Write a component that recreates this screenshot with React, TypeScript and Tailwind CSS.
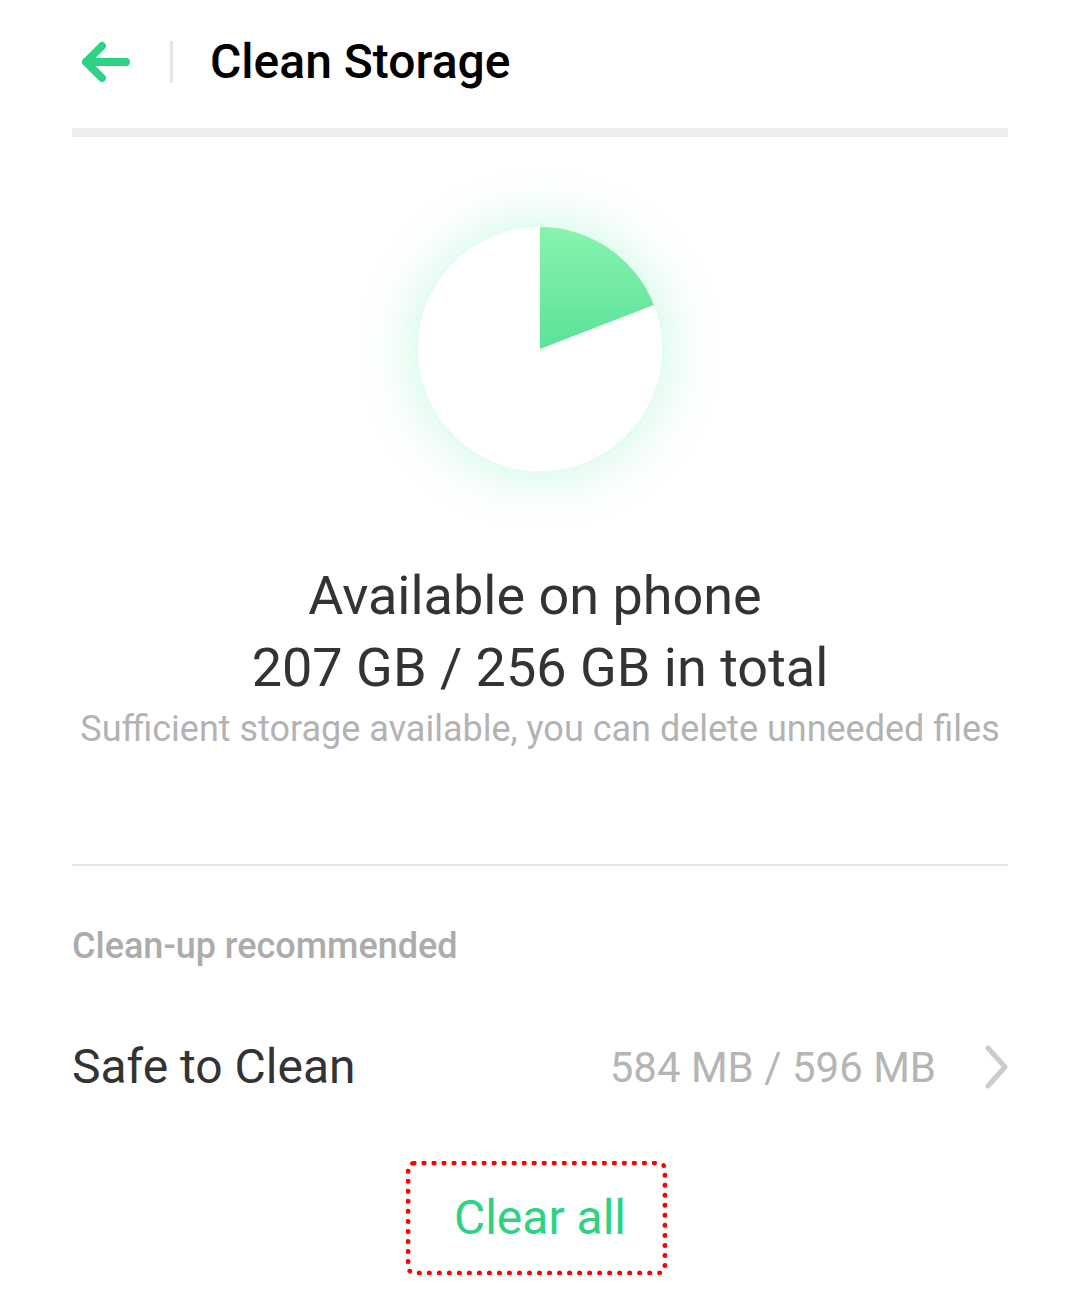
import React from "react";

function Pie() {
  const r = 122;
  const frac = 49 / 256;
  const a = frac * 2 * Math.PI;
  const x = 122 + r * Math.sin(a);
  const y = 122 - r * Math.cos(a);
  return (
    <div className="rounded-full w-[244px] h-[244px] bg-white shadow-[0_0_48px_10px_rgba(60,230,150,0.22)]">
      <svg width="244" height="244" viewBox="0 0 244 244">
        <defs>
          <linearGradient id="g" x1="0" y1="0" x2="0" y2="1">
            <stop offset="0" stopColor="#88f3ae" />
            <stop offset="1" stopColor="#5be29a" />
          </linearGradient>
        </defs>
        <circle cx="122" cy="122" r="122" fill="#ffffff" />
        <path d={`M122 122 L122 0 A122 122 0 0 1 ${x} ${y} Z`} fill="url(#g)" />
      </svg>
    </div>
  );
}

export default function App() {
  return (
    <div className="w-[1080px] h-[1300px] bg-white font-['Roboto',sans-serif] px-[72px]">
      <div className="h-[128px] flex items-center">
        <svg width="50" height="44" viewBox="0 0 50 44" className="ml-[8px] mt-[-4px]">
          <path d="M46 22 H6 M22 6 L6 22 L22 38" stroke="#2dd283" strokeWidth="8" strokeLinecap="round" strokeLinejoin="round" fill="none" />
        </svg>
        <div className="w-[3px] h-[42px] bg-[#e6e6e6] ml-[40px] mt-[-4px]" />
        <div className="ml-[37px] text-[48px] font-medium text-black leading-none mt-[-4px]">Clean Storage</div>
      </div>
      <div className="h-[9px] bg-[#eeeeee]" />
      <div className="flex justify-center mt-[90px]">
        <Pie />
      </div>
      <div className="flex flex-col items-center mt-[89px] text-center">
        <div className="text-[54px] leading-[72px] text-[#333333] pr-[10px]">Available on phone</div>
        <div className="text-[54px] leading-[72px] text-[#333333]">207 GB / 256 GB in total</div>
        <div className="text-[36px] leading-[50px] text-[#b3b3b3]">Sufficient storage available, you can delete unneeded files</div>
      </div>
      <div className="h-[2px] bg-[#e6e6e6] mt-[110px]" />
      <div className="mt-[58px] text-[36px] leading-[44px] font-medium text-[#acacac]">Clean-up recommended</div>
      <div className="mt-[69px] flex items-center h-[60px]">
        <div className="text-[48px] text-[#333333] flex-1">Safe to Clean</div>
        <div className="text-[42px] text-[#b5b5b5]">584 MB / 596 MB</div>
        <svg width="26" height="44" viewBox="0 0 26 44" className="ml-[48px] mr-[-2px]">
          <path d="M4 3 L21 22 L4 41" stroke="#cccccc" strokeWidth="5" strokeLinecap="round" strokeLinejoin="round" fill="none" />
        </svg>
      </div>
      <div className="flex justify-center mt-[64px]">
        <div className="w-[261px] h-[114px] border-[5px] border-dotted border-[#ff0000] rounded-[8px] flex items-center justify-center mr-[8px]">
          <span className="text-[48px] text-[#2dd283] ml-[8px]">Clear all</span>
        </div>
      </div>
    </div>
  );
}
